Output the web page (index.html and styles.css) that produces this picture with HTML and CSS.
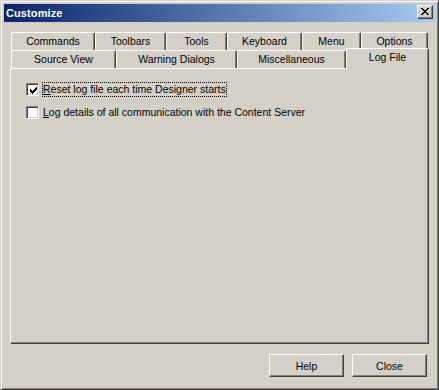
FILE: index.html
```html
<!DOCTYPE html>
<html lang="en">
<head>
  <meta charset="UTF-8">
  <title>Customize</title>
  <link rel="stylesheet" href="styles.css">
</head>
<body>

<div class="window">
  <div class="titlebar">
    <span class="title">Customize</span>
    <span class="close-btn">
      <svg width="8" height="7" viewBox="0 0 8 7" shape-rendering="crispEdges">
        <path fill="#000" d="M0 0h2v1h-2z M6 0h2v1h-2z M1 1h2v1h-2z M5 1h2v1h-2z M2 2h4v1h-4z M3 3h2v1h-2z M2 4h4v1h-4z M1 5h2v1h-2z M5 5h2v1h-2z M0 6h2v1h-2z M6 6h2v1h-2z"/>
      </svg>
    </span>
  </div>

  <div class="content">
    <div class="tab-row row-back">
      <div class="tab">Commands</div>
      <div class="tab">Toolbars</div>
      <div class="tab">Tools</div>
      <div class="tab">Keyboard</div>
      <div class="tab">Menu</div>
      <div class="tab">Options</div>
    </div>
    <div class="tab-row row-front">
      <div class="tab">Source View</div>
      <div class="tab">Warning Dialogs</div>
      <div class="tab">Miscellaneous</div>
      <div class="tab selected">Log File</div>
    </div>

    <div class="panel">
      <label class="option">
        <span class="checkbox">
          <svg width="7" height="7" viewBox="0 0 7 7" shape-rendering="crispEdges">
            <path fill="#000" d="M6 0h1v1h-1z M5 1h2v1h-2z M0 2h1v1h-1z M4 2h3v1h-3z M0 3h2v1h-2z M3 3h3v1h-3z M0 4h5v1h-5z M1 5h3v1h-3z M2 6h1v1h-1z"/>
          </svg>
        </span>
        <span class="option-text focused"><u>R</u>eset log file each time Designer starts</span>
      </label>
      <label class="option">
        <span class="checkbox"></span>
        <span class="option-text"><u>L</u>og details of all communication with the Content Server</span>
      </label>
    </div>

    <div class="buttons">
      <button>Help</button>
      <button>Close</button>
    </div>
  </div>
</div>

</body>
</html>
```

FILE: styles.css
```css
* {
  box-sizing: border-box;
}
body {
  margin: 0;
  background: #d4d0c8;
  font-family: "Liberation Sans", Arial, sans-serif;
  font-size: 10.5px;
  color: #000;
}
.window {
  width: 439px;
  height: 390px;
  padding: 3px;
  border: 1px solid;
  border-color: #d4d0c8 #404040 #404040 #d4d0c8;
  box-shadow: inset 1px 1px #fff, inset -1px -1px #808080;
  display: flex;
  flex-direction: column;
}
.titlebar {
  height: 18px;
  display: flex;
  justify-content: space-between;
  background: linear-gradient(to right, #0a246a, #a6caf0);
}
.title {
  padding-left: 2px;
  line-height: 18px;
  font-size: 11px;
  font-weight: bold;
  color: #fff;
  letter-spacing: 0.1px;
}
.close-btn {
  width: 16px;
  height: 14px;
  margin: 1px 2px 0 0;
  padding: 2px 0 0 3px;
  background: #d4d0c8;
  border: 1px solid;
  border-color: #fff #404040 #404040 #fff;
  box-shadow: inset -1px -1px #808080;
}
.close-btn svg {
  display: block;
}
.content {
  flex: 1;
  padding-top: 10px;
}
.tab-row {
  display: grid;
  height: 18px;
  margin-left: 7px;
}
.row-back {
  grid-template-columns: 84px 71px 61px 75px 59px 67px;
}
.row-front {
  grid-template-columns: 105px 121px 109px 83px;
}
.tab {
  height: 18px;
  line-height: 16px;
  text-align: center;
  background: #d4d0c8;
  border-top: 1px solid #fff;
  border-left: 1px solid #fff;
  border-right: 1px solid #404040;
  border-radius: 2px 2px 0 0;
  box-shadow: inset -1px 0 #808080;
}
.tab.selected {
  position: relative;
  z-index: 1;
  height: 21px;
  margin-top: -2px;
}
.panel {
  width: 419px;
  height: 276px;
  margin-left: 6px;
  padding: 13px 0 0 15px;
  border: 1px solid;
  border-color: #fff #404040 #404040 #fff;
  box-shadow: inset -1px -1px #808080;
  display: flex;
  flex-direction: column;
  gap: 8px;
}
.option {
  display: flex;
  align-items: center;
}
.checkbox {
  width: 13px;
  height: 13px;
  padding: 2px 0 0 2px;
  background: #fff;
  border: 1px solid;
  border-color: #808080 #fff #fff #808080;
  box-shadow: inset 1px 1px #404040, inset -1px -1px #d4d0c8;
}
.checkbox svg {
  display: block;
  margin: 1px 0 0 1px;
}
.option-text {
  margin-left: 3px;
  line-height: 13px;
  border: 1px dotted transparent;
}
.option-text.focused {
  border-color: #000;
}
.option-text u {
  text-decoration-thickness: 1px;
  text-underline-offset: 1px;
}
.buttons {
  display: flex;
  justify-content: flex-end;
  gap: 8px;
  margin: 10px 8px 0 0;
}
button {
  width: 75px;
  height: 23px;
  padding: 0;
  font-family: inherit;
  font-size: inherit;
  color: #000;
  background: #d4d0c8;
  border: 1px solid;
  border-color: #fff #404040 #404040 #fff;
  box-shadow: inset -1px -1px #808080;
}
```
